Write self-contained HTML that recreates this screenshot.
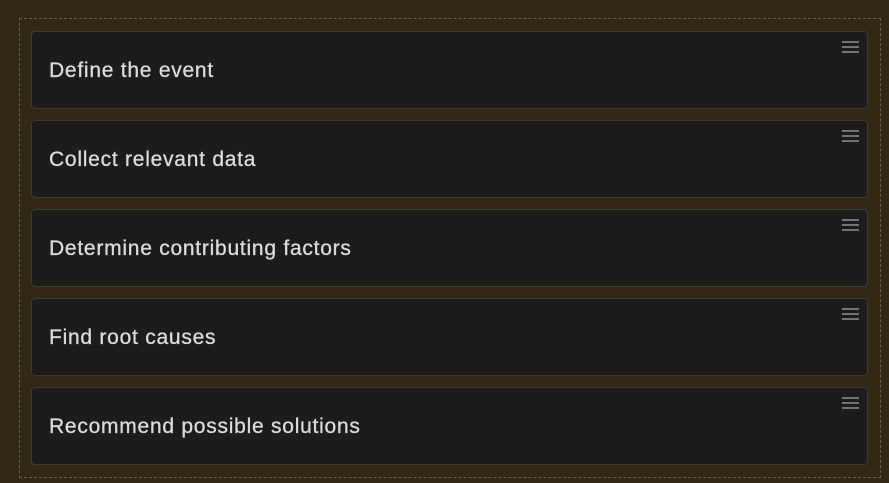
<!DOCTYPE html>
<html><head><style>
html,body{margin:0;padding:0;width:889px;height:483px;background:#302812;overflow:hidden}
.wrap{position:absolute;left:19px;top:18px;width:862px;height:460px;border:1px dashed #6a603f;box-sizing:border-box}
.card{position:absolute;left:31px;width:837px;height:78px;background:#1b1c1e;border:1px solid #3b3a33;border-radius:4px;box-sizing:border-box}
.card span{position:absolute;left:17px;top:27px;font-family:"Liberation Sans",sans-serif;font-size:21px;color:#dcdcd8;letter-spacing:0.75px;-webkit-text-stroke:0.3px #dcdcd8}
.card i{position:absolute;left:810px;top:9px;width:17px;height:12px;background:linear-gradient(#747474 0 2px,transparent 2px 5px,#747474 5px 7px,transparent 7px 10px,#747474 10px 12px)}
</style></head><body>
<div class="wrap"></div>
<div class="card" style="top:31px"><span>Define the event</span><i></i></div>
<div class="card" style="top:120px"><span>Collect relevant data</span><i></i></div>
<div class="card" style="top:209px"><span>Determine contributing factors</span><i></i></div>
<div class="card" style="top:298px"><span>Find root causes</span><i></i></div>
<div class="card" style="top:387px"><span>Recommend possible solutions</span><i></i></div>
</body></html>
